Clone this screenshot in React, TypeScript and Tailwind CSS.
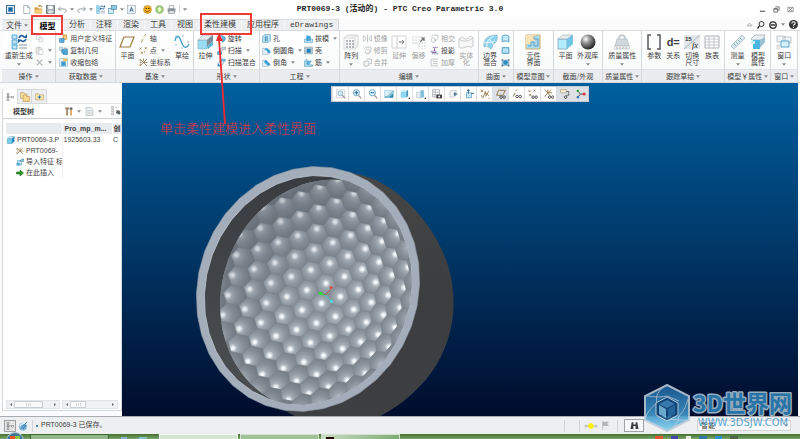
import type { ReactNode } from 'react';

const BLUE = '#5fb4dc';

// All icons are drawn on a 16x16 grid
const icons: Record<string, ReactNode> = {
  app: <><rect x="1" y="1" width="14" height="14" fill="#fff" stroke="#3b6f9c" strokeWidth="2" /><rect x="4" y="4" width="8" height="8" fill="#1769a5" /></>,
  file: <path d="M3 1h7l4 4v10H3zM10 1v4h4" fill="#fff" stroke="#8794a0" strokeWidth="1.2" />,
  open: <><path d="M1 4h5l2 2h6v9H1z" fill="#d99a3a" /><path d="M3 8h13l-3 7H1z" fill="#f6cf7d" /><path d="M8 3c2-3 5-2 6 1" fill="none" stroke="#b9762a" strokeWidth="2" /></>,
  save: <><path d="M1 1h14v14H1z" fill="#a9b0b8" stroke="#58616b" strokeWidth="1.5" /><path d="M4 1h8v6H4z" fill="#fff" /><path d="M4 10h8v5H4z" fill="#dfe3e6" /></>,
  undo: <path d="M5 3L1 7l4 4M1 7h9c6 0 6 6 1 6" fill="none" stroke="#8a939c" strokeWidth="1.6" />,
  redo: <path d="M11 3l4 4-4 4M15 7H6c-6 0-6 6-1 6" fill="none" stroke="#8a939c" strokeWidth="1.6" />,
  regen: <><path d="M1 1h5v4H1zM1 6h5v4H1zM1 11h5v4H1z" fill="#bfe6f7" stroke="#3c9ccc" strokeWidth=".8" /><path d="M8 11h8M8 14h8" stroke="#8b959e" strokeWidth="1.2" /><path d="M8 4c1-3 4-3 5-1M15 5c-1 3-4 3-5 1" fill="none" stroke="#1e5f9b" strokeWidth="1.6" /><path d="M12 4h4V0zM7 5v4l4-3z" fill="#1e5f9b" /></>,
  windows: <><rect x="1" y="6" width="9" height="9" fill="#d6ecf6" stroke="#3c86b0" /><rect x="6" y="1" width="9" height="7" fill="#8cc9e6" stroke="#3c6f92" /></>,
  letter: <><rect x="1" y="1" width="14" height="14" fill="#eef4f8" stroke="#8c9aa5" /><path d="M5 12l3-8 3 8M6 9h4" stroke="#225588" strokeWidth="1.4" fill="none" /></>,
  smile: <><circle cx="8" cy="8" r="7" fill="#f5b21d" stroke="#b87310" /><circle cx="5.5" cy="6" r="1" /><circle cx="10.5" cy="6" r="1" /><path d="M4 9c2 4 6 4 8 0" fill="none" stroke="#5b3a00" strokeWidth="1.3" /></>,
  globe: <><circle cx="8" cy="8" r="7" fill="#9fcf70" stroke="#95a68e" /><path d="M8 3l4 5h-2v4H6V8H4z" fill="#e9ffdc" /></>,
  printer: <><path d="M4 1h8v5H4z" fill="#fff" stroke="#777" /><path d="M1 6h14v6H1z" fill="#8c959e" /><path d="M3 10h10v5H3z" fill="#e6e9ec" stroke="#67717b" /></>,
  copy: <path d="M2 2h7v8H2zM7 6h7v8H7z" fill="#f5f5f5" stroke="#c3c6c9" />,
  paste: <><path d="M2 3h10v11H2z" fill="#e6e6e6" stroke="#bcbfc2" /><path d="M5 1h4v3H5z" fill="#c8cacc" /><path d="M7 7h7v8H7z" fill="#fff" stroke="#bcbfc2" /></>,
  cross: <path d="M3 3l10 10M13 3L3 13" stroke="#b0b3b6" strokeWidth="2" />,
  udf: <><path d="M7 1h7l1 8-4 2-5-4z" fill="#dca652" /><path d="M1 8h8v7H1z" fill="#5aaede" stroke="#2f7dad" /><path d="M8 4l5 1-1 4" fill="#fff2c4" /></>,
  copygeom: <><path d="M1 2h6v6H1z" fill="#dbeaf2" stroke="#8ba3b2" /><path d="M5 6h10v9H8l-3-3z" fill="#4aa4d6" stroke="#2a6e98" /><path d="M9 3h6v2H9z" fill="#98a8b2" /></>,
  shrink: <><path d="M1 1h14v14H1z" fill="#e9f4fa" stroke="#7fb0cc" /><path d="M4 6h8v8H4z" fill="#3f9ad0" /><path d="M7 1h8v5H7z" fill="#efc66d" /></>,
  plane: <path d="M5 3h10l-4 10H1z" fill="none" stroke="#9a7b3c" strokeWidth="1.2" />,
  axis: <path d="M4 15l3-6M8 7l1-1M10 4l2-4" stroke="#9a7b3c" strokeWidth="1.5" />,
  points: <path d="M1 3l3 3M4 3L1 6M10 2l4 4M14 2l-4 4M3 10l4 4M7 10l-4 4M10 9v3" stroke="#9a7b3c" strokeWidth="1.3" />,
  csys: <path d="M2 2l12 12M14 2L2 14M8 8h7M2 8h3M8 1v5M2 2v4M2 14v-4" stroke="#8f7440" strokeWidth="1.4" fill="none" />,
  sketch: <><path d="M1 7C2 1 5 1 7 7s5 9 8 3" fill="none" stroke="#419fce" strokeWidth="1.3" /><path d="M1 2h2M8 2h2M13 8h2M1 11h2M7 14h2" stroke="#8fbfd8" strokeWidth="1" /></>,
  extrude: <><path d="M1 6h9v9H1z" fill="#9adcf3" stroke="#7fb2cb" strokeWidth=".6" /><path d="M1 6l5-5h10l-6 5z" fill="#dfe8ec" stroke="#a0acb3" strokeWidth=".6" /><path d="M10 6l6-5v6l-6 6z" fill="#7d8d97" /><path d="M10 13l6-6v4l-5 4z" fill="#5cb4da" /></>,
  revolve: <><path d="M2 3h7c8 1 8 10 0 11V9H2z" fill={BLUE} stroke="#367fa8" /><path d="M4 5h5v3H4z" fill="#d8eff9" /></>,
  sweep: <><path d="M1 10h7v5H1z" fill={BLUE} stroke="#367fa8" /><path d="M4 10C4 4 9 2 15 2v4c-4 0-7 1-7 4" fill="#c5d4dd" stroke="#778b98" /></>,
  blend: <><path d="M1 10h6v5H1z" fill="#3a88b8" /><path d="M2 10L7 2h8l-3 6-5 7" fill="#d7e8f0" stroke="#60889f" /><path d="M7 2h8v4H7z" fill={BLUE} /></>,
  hole: <><path d="M1 4l4-3h10v11l-4 3H1z" fill="#bfe3f3" stroke="#4695bf" /><path d="M6 4v9M9 4v9" stroke="#2f7fa9" strokeWidth="1.5" /></>,
  round: <><path d="M1 4h6c5 0 8 4 8 8l-4 3H1z" fill="#e4eff5" stroke="#91abb9" /><path d="M6 4c5 0 8 3 9 8l-5 1c0-5-2-6-6-6z" fill="#41a3d5" /></>,
  chamfer: <><path d="M1 4h6l8 8-4 3H1z" fill="#e4eff5" stroke="#91abb9" /><path d="M7 3l8 8-4 3-8-7z" fill="#41a3d5" /></>,
  draft: <><path d="M1 9h14v6H1z" fill="#cbe4f0" stroke="#4c95bb" /><path d="M4 9V2l8 2v8l-8 1z" fill="#45a4d5" /></>,
  shell: <><path d="M1 2h14v12H1z" fill="#b5c9d4" stroke="#8297a5" /><path d="M5 5h7v7H5z" fill="#1f82ba" /></>,
  rib: <><path d="M1 5l4-3v10h10v3H1z" fill="#b9deef" stroke="#4c95bb" /><path d="M5 5h9l-5 7H5z" fill="#57aeda" /></>,
  pattern: <><path d="M1 4h11v11H1z" fill="#f8f8f8" stroke="#ccc" strokeWidth=".7" /><path d="M1 4l3-3h11l-3 3M15 1v11l-3 3" fill="#ececec" stroke="#cfcfcf" strokeWidth=".7" /><path d="M3 6h2v2H3zM6 6h2v2H6zM9 6h2v2H9zM3 9h2v2H3zM6 9h2v2H6zM9 9h2v2H9zM3 12h2v2H3zM6 12h2v2H6zM9 12h2v2H9z" fill="#b2b5b8" /></>,
  mirror: <path d="M1 3l4 3v4l-4 3zM8 1v14M15 3l-4 3v4l4 3z" fill="none" stroke="#b5b8bb" strokeWidth="1.4" />,
  trim: <path d="M2 5l4-3h8v8l-3 3H5M8 6a4 4 0 1 0 .1 0" fill="none" stroke="#b9bcbf" strokeWidth="1.5" />,
  merge: <><circle cx="6" cy="10" r="5" fill="#f0f0f0" stroke="#b5b8bb" strokeWidth="1.5" /><path d="M7 2h8v8h-3" fill="none" stroke="#b5b8bb" strokeWidth="1.5" /></>,
  extend: <><path d="M1 2h14v12H1z" fill="#fff" stroke="#cfd1d3" /><path d="M6 2v12" stroke="#ccc" /><path d="M8 8h5M11 6l2 2-2 2" fill="none" stroke="#777" /></>,
  offset: <><path d="M1 6h10v9M1 3h13v12" fill="none" stroke="#d0d2d4" strokeDasharray="2 1" /><path d="M1 9h7v6" fill="none" stroke="#d9dadb" /><path d="M9 8l4-4M10 4h3v3" fill="none" stroke="#777" strokeWidth="1.2" /></>,
  intersect: <path d="M2 5l4-3h8v6l-3 3H7M6 7a4 4 0 1 0 .1 0" fill="none" stroke="#b9bcbf" strokeWidth="1.5" />,
  project: <><path d="M5 3c3-3 6 2 9-1" fill="none" stroke="#8d6ba8" strokeWidth="1.5" /><path d="M1 9h9l5 5H5z" fill="#dbe8ef" stroke="#8194a0" /><path d="M8 4v5M3 12c3-2 5 1 8-1" fill="none" stroke="#8a43a3" strokeWidth="1.6" /></>,
  thicken: <path d="M2 2h12M2 2v12h12M5 6h9M5 10h9" fill="none" stroke="#b9bcbf" strokeWidth="1.5" />,
  solidify: <><path d="M1 5c4-5 6 3 9-1 2-2 4-2 5 0v8c-2 3-4-1-7 1-3 1-5 2-7 0z" fill="#f8f8f8" stroke="#c5c8ca" /><path d="M1 5c4 3 8 3 14-1" fill="none" stroke="#c6c8ca" /></>,
  boundary: <><path d="M2 13C1 6 5 1 15 1c1 5-1 8-4 9 0 2-1 4-2 5-2-2-4-3-7-2z" fill="#8dd2ef" stroke="#7fa9bd" strokeWidth=".6" /><path d="M5 14C4 8 7 4 12 2M2 9c3-1 8 0 11-2M7 5l5 6" fill="none" stroke="#f1fbff" /></>,
  fill: <path d="M2 3h12v10H2z" fill="#b5e3f5" stroke="#3b8fb9" strokeWidth="1.5" />,
  fillCurve: <path d="M2 4c4-3 8-3 12 0v10c-4-2-8-2-12 0z" fill="#c5e9f7" stroke="#4392ba" strokeWidth="1.5" />,
  freestyle: <><path d="M2 4h12v9H2z" fill="#9fcfe5" stroke="#688b9e" /><circle cx="8" cy="8" r="4" fill="#2b8cc4" /><path d="M1 2h3v3H1zM12 2h3v3h-3zM1 12h3v3H1zM12 12h3v3h-3z" fill="#667c8a" /></>,
  component: <><path d="M1 1h14v14H1z" fill="#a9daf0" stroke="#d3b06a" /><path d="M1 1h9v6H7v3H1z" fill="#f6e3b8" /><path d="M3 12h3V8h3v4h4V5H9V2" fill="none" stroke="#5e9dbb" /></>,
  section: <><path d="M1 5h9v10H1z" fill="#b2ecfd" stroke="#7fa5b6" strokeWidth=".8" /><path d="M1 5l5-4h10l-6 4z" fill="#e7edf0" stroke="#97a5ad" strokeWidth=".6" /><path d="M10 5l6-4v9l-6 5z" fill="#6fc4e8" /></>,
  ball: <circle cx="8" cy="8" r="7.5" fill="url(#ballShade)" />,
  weight: <><path d="M5 5C4 0 12 0 11 5" fill="none" stroke="#b8c2ca" strokeWidth="1.5" /><path d="M3 5h10l2 7H1z" fill="#d0d8de" stroke="#a7b2ba" strokeWidth=".6" /><path d="M0 12h16v3H0z" fill="#eef0f2" stroke="#b5bcc1" strokeWidth=".6" /><path d="M3 13v2M6 13v2M9 13v2M12 13v2" stroke="#999" strokeWidth=".7" /></>,
  brackets: <path d="M5 1H2v14h3M11 1h3v14h-3" fill="none" stroke="#54595e" strokeWidth="1.5" />,
  grid: <><path d="M1 2h14v12H1z" fill="#fff" stroke="#9a9ea2" strokeWidth=".8" /><path d="M1 5h14M1 8h14M1 11h14M5 2v12M10 2v12" stroke="#b6babe" strokeWidth=".8" /></>,
  ruler: <><path d="M1 12L12 1l3 3L4 15z" fill="#d6e9f1" stroke="#a5bac4" strokeWidth=".8" /><path d="M4 10l2 2M6 8l2 2M8 6l2 2M10 4l2 2" stroke="#8aa1ac" strokeWidth=".8" /></>,
  modelprop: <><path d="M1 5l4-4h10l-2 5H2z" fill="#e8eef1" stroke="#9aa6ad" strokeWidth=".7" /><path d="M3 6h7v9H3z" fill="#4ab5de" /><path d="M10 6l5-3v5l-5 6z" fill="#9ac2d3" /><path d="M1 7h4v3H1z" fill="#c7edf9" /></>,
  window: <><path d="M1 2h8v6H1zM7 3h8v6H7z" fill="#f2f4f5" stroke="#b5bcc1" strokeWidth=".8" /><path d="M5 7h8v6H5z" fill="#d6f0fb" stroke="#5aa6cb" /><path d="M1 11h3v4H1z" fill="#eee" stroke="#ccc" strokeWidth=".7" /></>,
  tree: <path d="M2 1h4v3H2zM2 6h4v3H2zM2 12h4v3H2zM11 7h4v3h-4zM6 8h5M4 4v8" fill="#fff" stroke="#666" />,
  folders: <><path d="M1 1h5l1 2h4v7H1z" fill="#f7e2b0" stroke="#b8924a" /><path d="M5 5h4l1 2h5v8H5z" fill="#f9d98d" stroke="#b8924a" /></>,
  favorites: <><path d="M1 3h5l1 2h8v9H1z" fill="#fae6b0" stroke="#b99753" /><path d="M8 6v6M5 9h6" stroke="#2878aa" strokeWidth="1.8" /></>,
  tools: <><path d="M2 1h7v3H7v11H4V4H2z" fill="#9a8060" /><path d="M11 1h3v14h-3z" fill="#dba251" /><path d="M10 1h5v4h-5z" fill="#66717a" /></>,
  list: <><path d="M2 1h9l3 3v11H2z" fill="#f6f8f9" stroke="#98a2aa" /><path d="M4 6h8M4 9h8M4 12h8" stroke="#9faab2" /></>,
  find: <><path d="M1 1h3v3H1zM1 6h3v3H1zM1 11h3v3H1zM7 2h3M7 7h3" fill="none" stroke="#999" /><path d="M8 10c2-5 7-4 7 2l-2 2-5-3z" fill="#5c6468" /></>,
  cube: <><path d="M1 5h9v10H1z" fill="#79cdef" stroke="#3e93bb" /><path d="M1 5l4-4h10l-5 4z" fill="#d7f1fb" stroke="#5aa2c3" /><path d="M10 5l5-4v10l-5 4z" fill="#2c8ab9" /></>,
  importf: <><path d="M3 5h8v9H3z" fill="#bfe2f1" stroke="#3b8cb3" /><path d="M1 10h6v5H1z" fill="#4ba6d1" /><path d="M9 7c0-4 3-5 6-5M12 5l2 3 1-6" fill="none" stroke="#2a77a0" strokeWidth="1.5" /></>,
  insert: <path d="M1 6h7V2l7 6-7 6v-4H1z" fill="#2b9b25" stroke="#11550e" />,
  zoomFit: <><path d="M1 1h13v13H1z" fill="none" stroke="#9aa4ac" strokeDasharray="2 1" /><circle cx="7" cy="7" r="4" fill="#d5ecf7" stroke="#7fabc3" strokeWidth="1.3" /><path d="M10 10l5 5" stroke="#999" strokeWidth="2" /></>,
  zoomIn: <><circle cx="7" cy="6" r="5" fill="#e3f4fc" stroke="#5fa0c2" strokeWidth="1.3" /><path d="M4 6h6M7 3v6" stroke="#1a6898" strokeWidth="1.6" /><path d="M10 10l5 5" stroke="#999" strokeWidth="2" /></>,
  zoomOut: <><circle cx="7" cy="6" r="5" fill="#e3f4fc" stroke="#5fa0c2" strokeWidth="1.3" /><path d="M4 6h6" stroke="#1a6898" strokeWidth="1.6" /><path d="M10 10l5 5" stroke="#999" strokeWidth="2" /></>,
  repaint: <><path d="M1 2h14v12H1z" fill="#2d86ab" /><path d="M1 2h14L5 12H1z" fill="#d7eef5" /><path d="M15 2v5L7 14H3z" fill="#8fc9dc" /></>,
  style: <><path d="M1 4h9v10H1z" fill="#8fd6f3" /><path d="M1 4l3-3h9l-3 3z" fill="#cdeaf6" /><path d="M10 4l3-3v10l-3 3z" fill="#4797bd" /><path d="M16 13v3h-3z" fill="#333" /></>,
  saved: <><path d="M1 5h7v9H1z" fill="#e7edf0" stroke="#b3bdc3" /><path d="M7 2h6v11l-3 1H7z" fill="#86c2dd" /><path d="M16 13v3h-3z" fill="#333" /></>,
  views: <><path d="M1 1h11v12H1zM1 5h11M1 9h11M5 1v12" fill="#fff" stroke="#8f989e" /><path d="M7 9h9v6H7z" fill="#3e4448" /><circle cx="11.5" cy="12" r="1.5" fill="#fff" /></>,
  annot: <><path d="M3 4l3-2h7v8l-3 3H3z" fill="#f3f6f8" stroke="#aab4bb" /><path d="M9 8h6M11 5v6" stroke="#2d5e88" strokeWidth="1.8" /></>,
  spin: <><path d="M4 6h8v8H4z" fill="#c4e6f4" stroke="#4a8fb0" /><path d="M7 1v6M12 7h4M5 3l2-2 2 2" stroke="#245f88" strokeWidth="1.5" fill="none" /></>,
  datum: <path d="M1 1l4 4M5 1L1 5M5 14l3-9M8 3l2 8M10 6l4 5M14 3l-5 9M2 10l2 4M15 14v1h-1" stroke="#8f7440" strokeWidth="1.3" fill="none" />,
  planeEye: <><path d="M4 2h11l-4 8H1z" fill="none" stroke="#8f7440" strokeWidth="1.5" /><circle cx="8" cy="13" r="2" fill="none" stroke="#444" strokeWidth="1.4" /><circle cx="13" cy="13" r="2" fill="none" stroke="#444" strokeWidth="1.4" /></>,
  axisEye: <><path d="M2 12l3-6M7 3l1-2" stroke="#8f7440" strokeWidth="1.5" /><circle cx="8" cy="12" r="2" fill="none" stroke="#444" strokeWidth="1.4" /><circle cx="13" cy="12" r="2" fill="none" stroke="#444" strokeWidth="1.4" /></>,
  pointEye: <><path d="M1 2l3 3M4 2L1 5M9 1l3 3M12 1L9 4M2 8l3 3M5 8l-3 3" stroke="#8f7440" strokeWidth="1.3" /><circle cx="8" cy="13" r="2" fill="none" stroke="#444" strokeWidth="1.4" /><circle cx="13" cy="13" r="2" fill="none" stroke="#444" strokeWidth="1.4" /></>,
  csysEye: <><path d="M1 1l9 10M11 1L1 12M6 1v5M6 6h7" stroke="#8f7440" strokeWidth="1.4" /><circle cx="9" cy="13" r="2" fill="none" stroke="#444" strokeWidth="1.4" /><circle cx="14" cy="13" r="2" fill="none" stroke="#444" strokeWidth="1.4" /></>,
  tag: <><path d="M1 1h9v5H1z" fill="#f6efd3" stroke="#a69b79" /><path d="M10 4h4v6h-4" fill="none" stroke="#555" strokeWidth="1.3" /><circle cx="9" cy="13" r="2" fill="none" stroke="#444" strokeWidth="1.4" /></>,
  center: <><path d="M3 3l4 5-4 5M7 8h6" fill="none" stroke="#444" strokeWidth="1.4" /><circle cx="3" cy="3" r="2" fill="#2d9e34" /><circle cx="3" cy="13" r="2" fill="#3278b8" /><circle cx="13" cy="8" r="2.5" fill="#d43b3b" /></>,
  browser: <><circle cx="8" cy="9" r="6" fill="#7db9df" stroke="#8bb6d2" /><path d="M3 8c3-5 8-5 11-2" fill="none" stroke="#e8f5fc" strokeWidth="2" /><path d="M5 12L14 2M8 13l5-7" stroke="#2f79a9" strokeWidth="1.6" /></>,
  flag: <path d="M3 1v14M3 2h10l-3 3 3 3H3" fill="#b2b5b8" stroke="#a2a5a8" />,
  binoculars: <path d="M3 2h3v4h4V2h3l2 12h-5V9H6v5H1z" fill="#3a3d40" />,
  search: <><circle cx="9" cy="6" r="5" fill="none" stroke="#333" strokeWidth="2" /><path d="M5 10l-4 5" stroke="#333" strokeWidth="2.5" /></>,
  learn: <><circle cx="8" cy="8" r="6.5" fill="none" stroke="#333" strokeWidth="2.5" /><path d="M3 8h10" stroke="#333" strokeWidth="3" /></>,
  help: <><circle cx="8" cy="8" r="8" fill="#333" /><path d="M5 6c0-4 6-4 6 0 0 2-3 2-3 4M8 12v2" fill="none" stroke="#fff" strokeWidth="2" /></>,
  caretUp: <path d="M2 11l6-6 6 6z" fill="#eee" stroke="#666" />,
  min: <path d="M2 12h12" stroke="#555" strokeWidth="2.5" />,
  restore: <path d="M5 2h9v8h-3M2 6h8v8H2zM2 7h8" fill="none" stroke="#555" strokeWidth="1.8" />,
  close: <path d="M2 3h12v10H2zM4 4l8 8M12 4l-8 8" fill="none" stroke="#666" strokeWidth="1.5" />,
};

function Icon({ name, className = 'size-[9px]' }: { name: string; className?: string }) {
  return <svg viewBox="0 0 16 16" className={`shrink-0 ${className}`} aria-hidden="true">{icons[name]}</svg>;
}

function Caret() {
  return <svg viewBox="0 0 6 4" className="w-1 h-[3px] shrink-0" aria-hidden="true"><path d="M0 0h6L3 4z" fill="#888" /></svg>;
}

type ItemProps = { icon: string; label?: string; title?: string; menu?: boolean; disabled?: boolean };

function Big({ icon, label, menu, disabled }: ItemProps) {
  return (
    <button className={`flex flex-col items-center pt-[3px] shrink-0 ${disabled ? 'text-neutral-400' : 'text-neutral-700'}`}>
      {icon === 'relation' ? (
        <span className="h-4 text-[11px] leading-4 font-bold font-['Liberation_Sans']">d=</span>
      ) : icon === 'switchdim' ? (
        <svg viewBox="0 0 16 16" className="size-4" aria-hidden="true">
          <path d="M0 1h16v14H0z" fill="#e4e7e9" />
          <path d="M0 15L16 1" stroke="#b0b4b7" />
          <text x="1" y="7" fontSize="6" fontWeight="bold" fontFamily="Liberation Sans" fill="#333">15</text>
          <text x="8" y="14" fontSize="8" fontStyle="italic" fontFamily="Liberation Serif" fill="#111">fx</text>
        </svg>
      ) : (
        <Icon name={icon} className="size-4" />
      )}
      <span className="mt-[2px] leading-[7px] whitespace-pre-line text-center">{label}</span>
      {menu && <span className="mt-1"><Caret /></span>}
    </button>
  );
}

function Small({ icon, label, title, menu, disabled }: ItemProps) {
  return (
    <button aria-label={label ?? title} className={`flex items-center gap-[2px] h-3 whitespace-nowrap ${disabled ? 'text-neutral-400' : 'text-neutral-700'}`}>
      <Icon name={icon} />
      {label}
      {menu && <span className="ml-[2px]"><Caret /></span>}
    </button>
  );
}

function Stack({ children }: { children: ReactNode }) {
  return <div className="flex flex-col pt-px shrink-0">{children}</div>;
}

function Group({ label, size, menu = true, children }: { label: string; size: string; menu?: boolean; children: ReactNode }) {
  return (
    <section className={`${size} min-w-0 flex flex-col border-r border-[#d5d9dc]`}>
      <div className="h-[38px] flex justify-evenly items-start bg-linear-to-b from-white to-[#f9fafa]">{children}</div>
      <div className="h-[13px] flex items-center justify-center gap-[2px] bg-[#eaecef] border-t border-[#e0e3e6] text-neutral-700 whitespace-nowrap">
        {label}
        {menu && <Caret />}
      </div>
    </section>
  );
}

function TitleBar() {
  return (
    <header className="h-[18px] relative flex items-center justify-between px-1.5 bg-white">
      <div className="flex items-center gap-[3px]">
        <Icon name="app" />
        <span className="w-px" />
        <Icon name="file" />
        <Icon name="open" />
        <Icon name="save" />
        <Icon name="undo" />
        <Caret />
        <Icon name="redo" />
        <Caret />
        <Icon name="regen" />
        <Icon name="windows" />
        <Caret />
        <Icon name="letter" />
        <span className="w-px" />
        <Icon name="smile" />
        <Icon name="globe" />
        <Icon name="printer" />
        <span className="w-px h-2 bg-neutral-300" />
        <Caret />
      </div>
      <h1 className="absolute inset-x-0 text-center text-[8px] leading-[18px] font-bold text-neutral-800 font-['Liberation_Mono','Noto_Sans_CJK_SC',monospace] pointer-events-none">
        PRT0069-3 (活动的) - PTC Creo Parametric 3.0
      </h1>
      <div className="flex items-center gap-[7px]">
        <button aria-label="最小化"><Icon name="min" className="size-[7px]" /></button>
        <button aria-label="还原"><Icon name="restore" className="size-[7px]" /></button>
        <button aria-label="关闭"><Icon name="close" className="size-[7px]" /></button>
      </div>
    </header>
  );
}

function TabBar() {
  const tabs = ['分析', '注释', '渲染', '工具', '视图', '柔性建模', '应用程序', 'eDrawings'];
  return (
    <nav className="h-[13px] flex items-end justify-between px-[2px] text-[8px] text-neutral-700 border-b border-[#d9dcdf]">
      <div className="flex h-[11px] leading-[10px] border-t border-r border-[#d9dcdf] bg-[#eceef0]">
        <button className="w-[30px] flex items-center justify-center gap-[2px]">文件<Caret /></button>
        <button className="w-[31px] h-3 bg-white font-bold text-black border-x border-[#d9dcdf]">模型</button>
        {tabs.map((tab) => (
          <button key={tab} className="px-[5px] border-l border-[#f6f7f8] font-['Liberation_Mono','Noto_Sans_CJK_SC',monospace]">{tab}</button>
        ))}
      </div>
      <div className="flex items-center gap-1 pb-px">
        <Icon name="caretUp" className="size-[7px]" />
        <Icon name="search" className="size-2" />
        <Icon name="learn" className="size-2" />
        <Caret />
        <Icon name="help" />
      </div>
    </nav>
  );
}

function Ribbon() {
  return (
    <div className="flex px-[2px] text-[7px] border-b border-[#d5d9dc]">
      <Group label="操作" size="flex-[54]">
        <Big icon="regen" label="重新生成" menu />
        <Stack>
          <Small icon="copy" title="复制" />
          <Small icon="paste" title="粘贴" menu />
          <Small icon="cross" title="删除" menu />
        </Stack>
      </Group>
      <Group label="获取数据" size="flex-[60]">
        <Stack>
          <Small icon="udf" label="用户定义特征" />
          <Small icon="copygeom" label="复制几何" />
          <Small icon="shrink" label="收缩包络" />
        </Stack>
      </Group>
      <Group label="基准" size="flex-[78]">
        <Big icon="plane" label="平面" />
        <Stack>
          <Small icon="axis" label="轴" />
          <Small icon="points" label="点" menu />
          <Small icon="csys" label="坐标系" />
        </Stack>
        <Big icon="sketch" label="草绘" />
      </Group>
      <Group label="形状" size="flex-[66]">
        <Big icon="extrude" label="拉伸" />
        <Stack>
          <Small icon="revolve" label="旋转" />
          <Small icon="sweep" label="扫描" menu />
          <Small icon="blend" label="扫描混合" />
        </Stack>
      </Group>
      <Group label="工程" size="flex-[80]">
        <Stack>
          <Small icon="hole" label="孔" />
          <Small icon="round" label="倒圆角" menu />
          <Small icon="chamfer" label="倒角" menu />
        </Stack>
        <Stack>
          <Small icon="draft" label="拔模" menu />
          <Small icon="shell" label="壳" />
          <Small icon="rib" label="筋" menu />
        </Stack>
      </Group>
      <Group label="编辑" size="flex-[140]">
        <Big icon="pattern" label="阵列" menu />
        <Stack>
          <Small icon="mirror" label="镜像" disabled />
          <Small icon="trim" label="修剪" disabled />
          <Small icon="merge" label="合并" disabled />
        </Stack>
        <Big icon="extend" label="延伸" disabled />
        <Big icon="offset" label="偏移" disabled />
        <Stack>
          <Small icon="intersect" label="相交" disabled />
          <Small icon="project" label="投影" />
          <Small icon="thicken" label="加厚" disabled />
        </Stack>
        <Big icon="solidify" label={'实体\n化'} disabled />
      </Group>
      <Group label="曲面" size="flex-[35]">
        <Big icon="boundary" label={'边界\n混合'} />
        <Stack>
          <Small icon="fillCurve" title="填充" />
          <Small icon="fill" title="样式" />
          <Small icon="freestyle" title="自由式" />
        </Stack>
      </Group>
      <Group label="模型意图" size="flex-[39]">
        <Big icon="component" label={'元件\n界面'} />
      </Group>
      <Group label="截面/外观" size="flex-[49]" menu={false}>
        <Big icon="section" label="平面" />
        <Big icon="ball" label="外观库" menu />
      </Group>
      <Group label="质量属性" size="flex-[39]">
        <Big icon="weight" label="质量属性" menu />
      </Group>
      <Group label="跟踪草绘" size="flex-[83]">
        <Big icon="brackets" label="参数" />
        <Big icon="relation" label="关系" />
        <Big icon="switchdim" label={'切换\n尺寸'} />
        <Big icon="grid" label="族表" />
      </Group>
      <Group label="模型￥属性" size="flex-[46]">
        <Big icon="ruler" label="测量" menu />
        <Big icon="modelprop" label={'模型\n属性'} />
      </Group>
      <Group label="窗口" size="flex-[26]">
        <Big icon="window" label="窗口" menu />
      </Group>
    </div>
  );
}

function ScrollBar({ size, thumb }: { size: string; thumb: string }) {
  return (
    <div className={`${size} h-[9px] flex items-center bg-[#eff1f3] border border-[#e2e5e8]`}>
      <svg viewBox="0 0 7 7" className="size-[7px]" aria-hidden="true"><path d="M5 2v3L3 3.500z" fill="#666" /></svg>
      <span className={`${thumb} h-[7px] flex justify-center items-center gap-px bg-[#f8f9fa] border border-[#c9ced3]`}>
        <i className="w-px h-[3px] bg-neutral-300" />
        <i className="w-px h-[3px] bg-neutral-300" />
        <i className="w-px h-[3px] bg-neutral-300" />
      </span>
      <svg viewBox="0 0 7 7" className="size-[7px] ml-auto" aria-hidden="true"><path d="M2 2v3l2-1.500z" fill="#666" /></svg>
    </div>
  );
}

function ModelTree() {
  const rows = [
    { icon: 'cube', name: 'PRT0069-3.P', value: '1925603.33', last: 'C', indent: 'pl-px' },
    { icon: 'csys', name: 'PRT0069-', indent: 'pl-[10px]' },
    { icon: 'importf', name: '导入特征 标', indent: 'pl-[10px]' },
    { icon: 'insert', name: '在此插入', indent: 'pl-[10px]' },
  ];
  return (
    <aside className="w-[122px] shrink-0 flex flex-col pl-[2px] pt-1.5 pb-[5px] bg-[#fbfbfc] text-[7px] text-neutral-700">
      <div className="flex h-[15px] border-l border-[#d5d9dc]">
        <button aria-label="模型树" className="w-[14px] grid place-items-center bg-white"><Icon name="tree" className="size-2" /></button>
        <button aria-label="文件夹" className="w-[15px] grid place-items-center bg-[#eceef0] border border-[#d5d9dc]"><Icon name="folders" className="size-[10px]" /></button>
        <button aria-label="收藏夹" className="w-[15px] grid place-items-center bg-[#eceef0] border border-l-0 border-[#d5d9dc]"><Icon name="favorites" /></button>
        <span className="flex-1 border-b border-[#e1e4e7]" />
      </div>
      <div className="flex-1 flex flex-col bg-white border-x border-b border-[#d5d9dc]">
        <div className="h-[15px] flex items-center gap-1 pl-[10px] border-b border-[#cdd1d5]">
          <h2 className="font-bold text-[7px] mr-auto">模型树</h2>
          <Icon name="tools" />
          <Caret />
          <Icon name="list" />
          <Caret />
          <span className="w-px" />
          <Icon name="find" className="size-[10px]" />
        </div>
        <table className="mt-1 ml-[3px] table-fixed w-[115px] leading-[11px] font-['Liberation_Sans','Noto_Sans_CJK_SC',sans-serif]">
          <thead className="bg-[#e9ecef]">
            <tr className="h-[11px] text-left">
              <th className="w-[56px]" aria-label="名称" />
              <th className="w-[50px] pl-[2px] border-l border-white font-bold">Pro_mp_m...</th>
              <th className="pl-px border-l border-white">创</th>
            </tr>
          </thead>
          <tbody>
            {rows.map((row) => (
              <tr key={row.name} className="h-[11px]">
                <td className="border-r border-[#eceef0]">
                  <div className={`flex items-center gap-[2px] overflow-hidden whitespace-nowrap ${row.indent}`}>
                    <Icon name={row.icon} className="size-2" />
                    {row.name}
                  </div>
                </td>
                <td className="pl-px">{row.value}</td>
                <td className="pl-px">{row.last}</td>
              </tr>
            ))}
          </tbody>
        </table>
        <div className="mt-auto flex gap-[2px] px-[3px] pb-px">
          <ScrollBar size="w-[54px]" thumb="w-[29px]" />
          <ScrollBar size="flex-1" thumb="w-4" />
        </div>
      </div>
    </aside>
  );
}

// Faceted ellipse, tilted 20 degrees
function facets(cx: number, cy: number, rx: number, ry: number, n: number) {
  const tilt = (20 * Math.PI) / 180;
  return Array.from({ length: n }, (_, k) => {
    const t = (k / n) * 2 * Math.PI;
    const x = rx * Math.cos(t);
    const y = ry * Math.sin(t);
    return `${(cx + x * Math.cos(tilt) - y * Math.sin(tilt)).toFixed(1)},${(cy + x * Math.sin(tilt) + y * Math.cos(tilt)).toFixed(1)}`;
  }).join(' ');
}

// Where the light hits the lens at lattice index (i, j)
function glint(i: number, j: number) {
  const x = 438 + 56.5 * i - 1.1 * i * i - 12.3 * j - 1.07 * j * j + 0.9 * i * j;
  const y = 400 - 20.5 * i - 0.3 * i * i + 60.5 * j - 0.37 * j * j + 0.3 * i * j;
  return [58 + x / 3, 67 + y / 3];
}

function cellPoint(i: number, j: number) {
  const [x, y] = glint(i, j);
  return [x - 0.08 * (x - 201), y - 0.08 * (y - 213)];
}

const corners = [[2, 1], [1, 2], [-1, 1], [-2, -1], [-1, -2], [1, -1]];

const lenses = Array.from({ length: 361 }, (_, k) => [(k % 19) - 9, Math.floor(k / 19) - 9])
  .filter(([i, j]) => {
    const [x, y] = cellPoint(i, j);
    return Math.hypot(x - 202, y - 210) < 135;
  })
  .map(([i, j]) => ({
    id: `lens${i + 9}_${j + 9}`,
    at: glint(i, j),
    points: corners.map(([a, b]) => cellPoint(i + a / 3, j + b / 3).map((v) => v.toFixed(1)).join(',')).join(' '),
  }));

function LensModel() {
  return (
    <svg width="678" height="333" viewBox="0 0 678 333" className="absolute left-0 top-0 max-w-none" aria-label="PRT0069-3">
      <defs>
        <linearGradient id="body" x1="0" y1="0" x2="0" y2="1">
          <stop offset="0" stopColor="#474747" />
          <stop offset=".5" stopColor="#3c3d3f" />
          <stop offset="1" stopColor="#3d3f43" />
        </linearGradient>
        <linearGradient id="wall" x1="0" y1="0" x2="0" y2="1">
          <stop offset="0" stopColor="#393c40" />
          <stop offset="1" stopColor="#4c4f52" />
        </linearGradient>
        <linearGradient id="shade" x1=".1" y1="0" x2=".5" y2=".7">
          <stop offset="0" stopColor="#3f464e" stopOpacity=".45" />
          <stop offset=".8" stopColor="#5d6670" stopOpacity="0" />
        </linearGradient>
        <clipPath id="inner"><polygon points={facets(186, 207, 102, 116, 36)} /></clipPath>
        <clipPath id="floor"><polygon points={facets(202, 212, 102, 117, 90)} /></clipPath>
        {lenses.map((lens) => (
          <radialGradient key={lens.id} id={lens.id} gradientUnits="userSpaceOnUse" cx={lens.at[0]} cy={lens.at[1]} r="18">
            <stop offset="0" stopColor="#fff" />
            <stop offset=".07" stopColor="#f2f7fc" />
            <stop offset=".23" stopColor="#a7afb8" />
            <stop offset=".42" stopColor="#949ca6" />
            <stop offset=".62" stopColor="#868e97" />
            <stop offset="1" stopColor="#747c85" />
          </radialGradient>
        ))}
      </defs>
      <path d="M198 84L235 91C268 97 305 130 323 174C336 208 335 246 315 281C300 306 275 326 252 336L178 336L160 326Z" fill="url(#body)" />
      <polygon points={facets(186, 206, 110, 124, 36)} fill="#a4aebb" stroke="#8c96a3" strokeWidth=".6" />
      <polygon points={facets(186, 207, 102, 116, 36)} fill="url(#wall)" stroke="#bcc5cf" strokeWidth=".8" />
      <g clipPath="url(#inner)">
        <g clipPath="url(#floor)">
          <rect x="90" y="90" width="220" height="240" fill="#858d96" />
          {lenses.map((lens) => (
            <polygon key={lens.id} points={lens.points} fill={`url(#${lens.id})`} stroke="#7f8790" strokeWidth=".3" />
          ))}
          <rect x="90" y="90" width="220" height="240" fill="url(#shade)" />
        </g>
      </g>
      <path d="M203 212l8-8" stroke="#c84b4b" />
      <path d="M203 212l7 7" stroke="#3bd5df" />
      <path d="M203 212l-4-1" stroke="#32c83a" />
      <circle cx="209" cy="204.5" r="1.2" fill="#e34040" />
      <circle cx="209.5" cy="218.5" r="1.4" fill="#42e8f0" />
      <circle cx="198.5" cy="210.5" r="1.8" fill="#2cde32" />
    </svg>
  );
}

function Viewport() {
  const tools = ['zoomFit', 'zoomIn', 'zoomOut', 'repaint', 'style', 'saved', 'views', 'annot', 'spin', 'datum', 'planeEye', 'axisEye', 'pointEye', 'csysEye', 'tag', 'center'];
  const pressed = ['planeEye', 'tag', 'center'];
  return (
    <main className="flex-1 min-w-0 relative overflow-hidden mr-[2px] bg-linear-to-b from-[#00609f] via-[#003767] to-[#000c2c]">
      <LensModel />
      <div className="relative flex justify-center pt-[3px]">
        <div className="flex h-4 bg-[#f4f6f8] border border-[#c6ccd2]">
          {tools.map((tool) => (
            <button key={tool} aria-label={tool} className={`w-4 grid place-items-center border-l border-[#dcdfe2] ${pressed.includes(tool) ? 'bg-[#dde1e6]' : 'bg-white'}`}>
              <Icon name={tool} className="size-[10px]" />
            </button>
          ))}
        </div>
      </div>
      <p className="absolute left-[38px] top-9 text-[13px] leading-[18px] whitespace-nowrap font-light text-[#e8343c]">单击柔性建模进入柔性界面</p>
    </main>
  );
}

function StatusBar() {
  return (
    <footer className="h-[18px] flex items-center border-t border-[#a9adb2] bg-[#edeff1] text-[7px] text-neutral-700 pl-1 pr-[9px]">
      <button aria-label="导航器" className="w-3 h-3 grid place-items-center border border-neutral-400 bg-neutral-200"><Icon name="tree" className="size-2" /></button>
      <button aria-label="浏览器" className="ml-[2px]"><Icon name="browser" className="size-[10px]" /></button>
      <span className="w-px h-3 ml-1 bg-neutral-300" />
      <span className="size-[2px] rounded-full ml-[3px] bg-[#17649a]" />
      <p className="ml-[3px] font-['Liberation_Sans','Noto_Sans_CJK_SC',sans-serif]">PRT0069-3 已保存。</p>
      <div className="ml-auto flex items-center">
        <span className="w-px h-3 bg-neutral-300" />
        <span className="w-px h-3 ml-[14px] bg-neutral-300" />
        <svg viewBox="0 0 14 8" className="w-[14px] h-2 ml-1" aria-hidden="true">
          <path d="M1 4h12" stroke="#bcbcbc" />
          <circle cx="2" cy="4" r="1.5" fill="#c2c2c2" />
          <circle cx="12" cy="4" r="1.5" fill="#c2c2c2" />
          <circle cx="7" cy="4" r="2.8" fill="#fdf000" />
        </svg>
        <span className="ml-[3px]"><Icon name="flag" /></span>
        <span className="w-px h-3 ml-[7px] bg-neutral-300" />
        <button aria-label="查找" className="ml-1.5 w-5 h-[13px] grid place-items-center bg-[#f6f7f8] border border-neutral-400"><Icon name="binoculars" /></button>
        <div className="relative ml-[53px] w-[94px] h-[11px]">
          <select aria-label="选择过滤器" defaultValue="智能" className="block size-full appearance-none pl-[3px] bg-[#f8f9fa] border border-neutral-300 leading-[9px]">
            <option>智能</option>
          </select>
          <span className="absolute right-[3px] top-1 pointer-events-none"><Caret /></span>
        </div>
      </div>
    </footer>
  );
}

function Taskbar() {
  return (
    <div className="h-[5px] flex items-start gap-[2px] overflow-hidden bg-linear-to-b from-[#47702e] to-[#76a76b] pl-[30px]">
      <span className="w-[79px] h-[5px] bg-[#8fb788] border-t border-x border-[#3d6632]" />
      <span className="w-[46px] h-[5px] flex gap-3 justify-center pt-[3px]">
        <i className="w-[6px] h-[2px] bg-[#8bb5d0]" />
        <i className="w-[8px] h-[2px] bg-[#84c4cf]" />
      </span>
      <span className="w-[79px] h-[5px] bg-[#d6e4d2] border-t border-x border-[#f0f5ee]" />
      <span className="w-[79px] h-[5px] bg-[#9fc298] border-t border-x border-[#d2e2ce]" />
      <span className="w-[79px] h-[5px] bg-linear-to-r from-[#c8dcc4] to-[#7fac76] border-t border-x border-[#d2e2ce] pl-1"><i className="block w-2 h-1 mt-[2px] bg-[#24050a]" /></span>
      <span className="ml-auto mr-[62px] mt-[2px] flex gap-2">
        <i className="w-[8px] h-[3px] bg-[#df5634]" />
        <i className="w-[7px] h-[3px] bg-[#4149ae]" />
        <i className="w-[5px] h-[3px] bg-[#e6ebe2]" />
        <i className="w-[8px] h-[3px] bg-[#2f79a5]" />
        <i className="w-[7px] h-[3px] bg-[#2f8fd0]" />
        <i className="w-[8px] h-[3px] bg-[#4d6a49]" />
      </span>
    </div>
  );
}

function Watermark() {
  return (
    <div className="absolute right-1 bottom-[7px] flex items-center pointer-events-none opacity-90">
      <svg viewBox="0 0 46 48" className="w-[46px] h-12" aria-hidden="true">
        <defs>
          <linearGradient id="hexFill" x1="0" y1="0" x2="0" y2="1">
            <stop offset="0" stopColor="#1d5f98" />
            <stop offset=".6" stopColor="#3b8fc4" />
            <stop offset="1" stopColor="#7fd0f0" />
          </linearGradient>
        </defs>
        <path d="M23 1L45 12v24L23 47 1 36V12z" fill="url(#hexFill)" stroke="#b9cad8" strokeWidth="2" />
        <path d="M23 1C14 6 11 12 13 19M1 12c7 0 13 2 22 0l12 5M45 12c-3 9-4 14-10 20M45 36c-8 1-14-1-22-1l-10-5M23 47c7-4 11-8 12-15M1 36c2-8 6-12 12-17" fill="none" stroke="#a9c5da" strokeWidth="1" />
        <path d="M23 13l11 6v12l-11 6-11-6V19z" fill="#134a7e" stroke="#c8dbe8" />
        <path d="M23 16l8 4-8 4-8-4z" fill="#3d85bb" />
        <path d="M15 21l7 4v9l-7-4z" fill="#75b9de" />
        <path d="M31 21l-7 4v9l7-4z" fill="#2a6ea8" />
      </svg>
      <div className="flex flex-col items-center whitespace-nowrap">
        <svg viewBox="0 0 106 28" className="w-[106px] h-7 overflow-visible" aria-hidden="true">
          <text x="3" y="22" fontSize="23" fontWeight="700" fontFamily="Noto Sans CJK SC, sans-serif" fill="#2c7fb5" stroke="#a5bccd" strokeWidth="3" strokeLinejoin="round" paintOrder="stroke">3D世界网</text>
        </svg>
        <span className="text-[10px] leading-[9px] text-[#4d9bcc] font-['DejaVu_Sans',sans-serif]">WWW.3DSJW.COM</span>
      </div>
    </div>
  );
}

export default function App() {
  return (
    <div lang="zh-CN" className="relative h-screen flex flex-col overflow-hidden bg-[#fbfbfc] font-['Noto_Sans_CJK_SC',sans-serif]">
      <svg className="absolute size-0" aria-hidden="true">
        <radialGradient id="ballShade" cx=".35" cy=".3" r=".75">
          <stop offset="0" stopColor="#fff" />
          <stop offset=".35" stopColor="#999" />
          <stop offset="1" stopColor="#1c1c1c" />
        </radialGradient>
      </svg>
      <TitleBar />
      <TabBar />
      <Ribbon />
      <div className="flex-1 min-h-0 flex">
        <ModelTree />
        <Viewport />
      </div>
      <StatusBar />
      <Taskbar />

      {/* Start orb overlaps the status bar */}
      <svg viewBox="0 0 18 18" className="absolute left-1.5 -bottom-[11px] size-[18px]" aria-hidden="true">
        <circle cx="9" cy="9" r="8.5" fill="#3f7896" stroke="#b5cdd6" />
        <path d="M4 4h5v4H4z" fill="#e8542e" />
        <path d="M9 4h5v4H9z" fill="#8cc540" />
      </svg>

      <Watermark />

      {/* Tutorial callouts */}
      <div className="absolute left-[31px] top-[15px] w-8 h-5 border-2 border-[#f03a3a] pointer-events-none" />
      <div className="absolute left-[200px] top-[13px] w-[52px] h-[22px] border-2 border-[#f03a3a] pointer-events-none" />
      <svg viewBox="0 0 12 92" className="absolute left-[215px] top-[33px] w-3 h-[92px] pointer-events-none" aria-hidden="true">
        <path d="M4 6l6 85" stroke="#ee2b30" strokeWidth="1.8" />
        <path d="M4 0l4 8H1z" fill="#ee2b30" />
      </svg>
    </div>
  );
}
